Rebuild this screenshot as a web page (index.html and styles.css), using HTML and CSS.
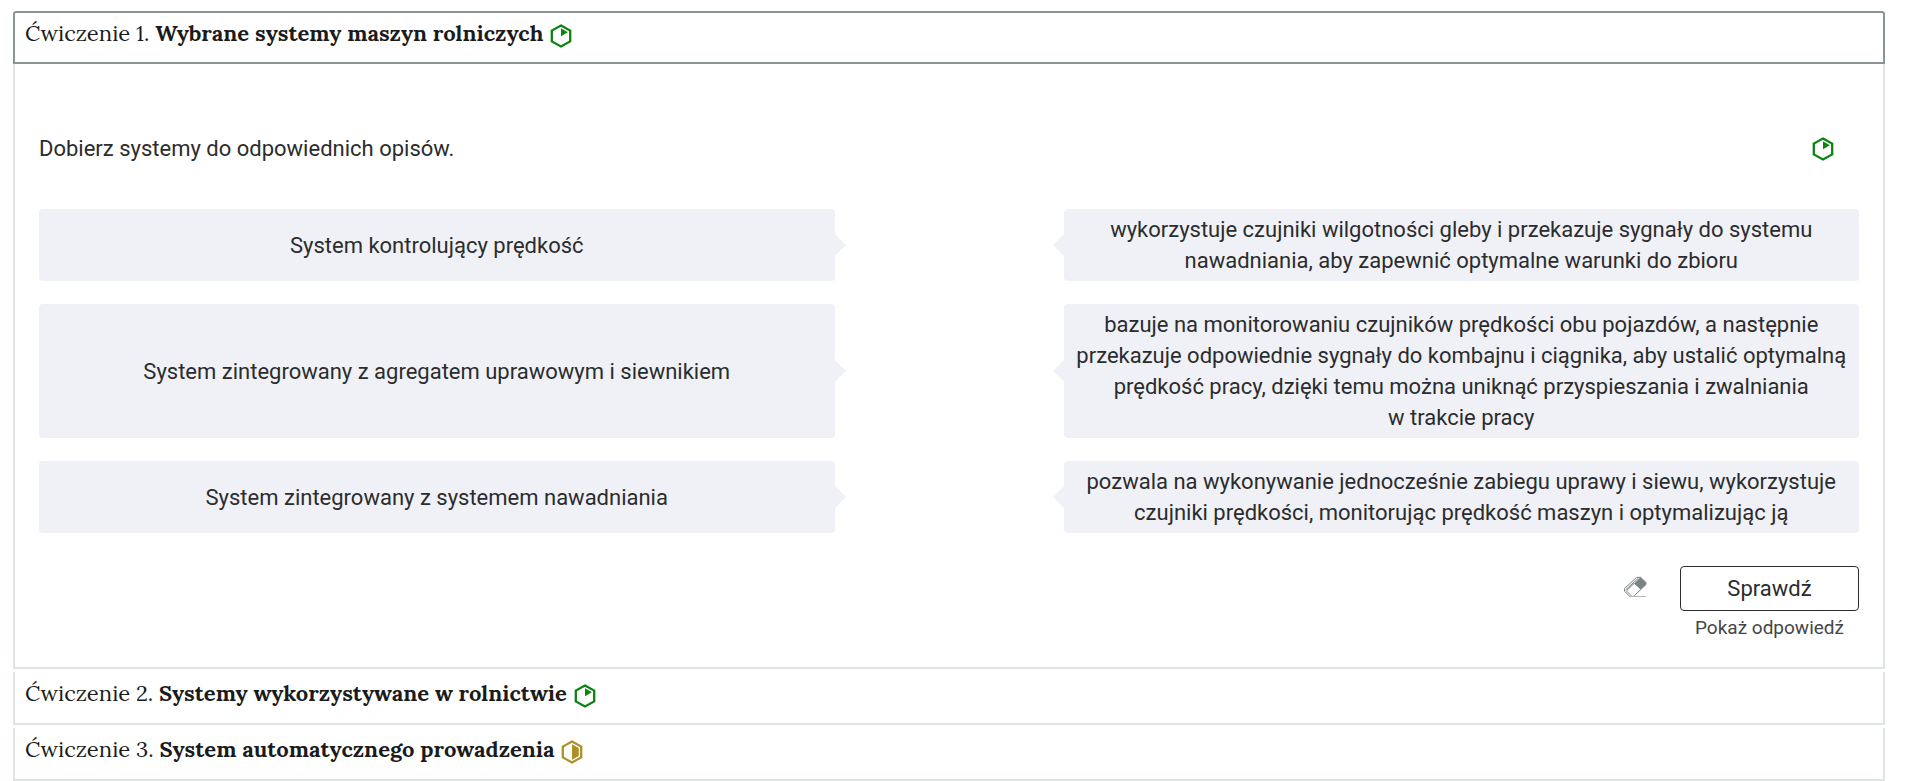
FILE: index.html
```html
<!DOCTYPE html>
<html lang="pl">
<head>
<meta charset="utf-8">
<title>Ćwiczenia</title>
<link rel="stylesheet" href="styles.css">
</head>
<body>
<svg class="sprite" aria-hidden="true">
  <symbol id="level-easy" viewBox="0 0 22 24">
    <path d="M11 1.5 20.2 6.6V17.4L11 22.5 1.8 17.4V6.6Z" fill="none" stroke="currentColor" stroke-width="2.3"/>
    <path d="M11 4.3 17.8 8.2 11 12.2Z" fill="currentColor"/>
  </symbol>
  <symbol id="level-medium" viewBox="0 0 22 24">
    <path d="M11 1.5 20.2 6.6V17.4L11 22.5 1.8 17.4V6.6Z" fill="none" stroke="currentColor" stroke-width="2.3"/>
    <path d="M11 4.2 17.8 8V16L11 19.8Z" fill="currentColor"/>
  </symbol>
</svg>
<main class="exercises">
  <section class="exercise">
    <h2 class="heading"><button class="toggle open" type="button" aria-expanded="true">Ćwiczenie 1. <strong>Wybrane systemy maszyn rolniczych</strong> <svg class="level easy"><use href="#level-easy"/></svg></button></h2>
    <div class="panel">
      <div class="task">
        <p class="instruction">Dobierz systemy do odpowiednich opisów.</p>
        <svg class="level easy"><use href="#level-easy"/></svg>
      </div>
      <div class="pairs">
        <button class="card left" type="button">System kontrolujący prędkość</button>
        <button class="card right" type="button">wykorzystuje czujniki wilgotności gleby i&nbsp;przekazuje sygnały do systemu nawadniania, aby zapewnić optymalne warunki do zbioru</button>
        <button class="card left" type="button">System zintegrowany z&nbsp;agregatem uprawowym i&nbsp;siewnikiem</button>
        <button class="card right" type="button">bazuje na monitorowaniu czujników prędkości obu pojazdów, a&nbsp;następnie przekazuje odpowiednie sygnały do kombajnu i&nbsp;ciągnika, aby ustalić optymalną prędkość pracy, dzięki temu można uniknąć przyspieszania i&nbsp;zwalniania w&nbsp;trakcie pracy</button>
        <button class="card left" type="button">System zintegrowany z&nbsp;systemem nawadniania</button>
        <button class="card right" type="button">pozwala na wykonywanie jednocześnie zabiegu uprawy i&nbsp;siewu, wykorzystuje czujniki prędkości, monitorując prędkość maszyn i&nbsp;optymalizując ją</button>
      </div>
      <div class="actions">
        <button class="erase" type="button" aria-label="Wyczyść">
          <svg viewBox="0 0 24 22" width="24" height="22">
            <path d="M6 19.5 1.5 15.2V12.5L13.5 1.5 17.5 1.3 23 6.5V8.5L11.5 19.5 10 20.5H7Z" fill="#fff" stroke="#7b8385"/>
            <path d="M17.5 1.3 23 6.5V8.5L17.5 13.5 11 7.5Z" fill="#7b8385"/>
            <path d="M11 7.5 4 14.2V15.5L8.5 20M2.5 14 15.5 2" fill="none" stroke="#7b8385"/>
            <path d="M6 20.5H23" stroke="#b4babb"/>
          </svg>
        </button>
        <div class="verify">
          <button class="check" type="button">Sprawdź</button>
          <button class="answer" type="button">Pokaż odpowiedź</button>
        </div>
      </div>
    </div>
  </section>
  <section class="exercise">
    <h2 class="heading"><button class="toggle" type="button" aria-expanded="false">Ćwiczenie 2. <strong>Systemy wykorzystywane w&nbsp;rolnictwie</strong> <svg class="level easy"><use href="#level-easy"/></svg></button></h2>
  </section>
  <section class="exercise">
    <h2 class="heading"><button class="toggle" type="button" aria-expanded="false">Ćwiczenie 3. <strong>System automatycznego prowadzenia</strong> <svg class="level medium"><use href="#level-medium"/></svg></button></h2>
  </section>
</main>
</body>
</html>
```
FILE: styles.css
```css
* { box-sizing: border-box; }
body {
  margin: 0;
  background: #fff;
  color: #2b2c2e;
  font: 22px/31px Roboto, sans-serif;
}
button {
  margin: 0;
  border: 0;
  background: none;
  color: inherit;
  font: inherit;
  cursor: pointer;
}
.sprite { position: absolute; width: 0; height: 0; }
.exercises {
  display: flex;
  flex-direction: column;
  gap: 3px;
  padding: 11px 35px 0 13px;
}
.heading { margin: 0; font-weight: 400; }
.toggle {
  display: block;
  width: 100%;
  padding: 6px 10px 15px;
  border: solid #dfe4e4;
  border-width: 0 2px 2px;
  color: #1b1b1b;
  font: 22px/30px Lora, "Liberation Serif", serif;
  text-align: left;
}
.toggle.open {
  padding: 5px 10px 14px;
  border: 2px solid #8a9495;
  border-radius: 3px 3px 0 0;
}
.level { width: 22px; height: 24px; vertical-align: -7px; }
.toggle .level { margin-left: 1px; }
.easy { color: #0a850f; }
.medium { color: #ab9127; }
.panel {
  padding: 69px 24px 24px;
  border: solid #dfe4e4;
  border-width: 0 2px 2px;
}
.task {
  display: flex;
  align-items: center;
  justify-content: space-between;
  padding-right: 25px;
}
.instruction { margin: 0; }
.pairs {
  display: grid;
  grid-template-columns: 1fr 1fr;
  gap: 23px 229px;
  margin-top: 45px;
}
.card {
  position: relative;
  padding: 5px 10px;
  border-radius: 4px;
  background: #f0f1f6;
  text-align: center;
}
.card::after {
  content: "";
  position: absolute;
  top: 50%;
  margin-top: -11px;
  border: 11px solid transparent;
}
.left::after { left: 100%; border-left-color: #f0f1f6; border-right-width: 0; }
.right::after { right: 100%; border-right-color: #f0f1f6; border-left-width: 0; }
.actions {
  display: flex;
  justify-content: flex-end;
  align-items: flex-start;
  gap: 33px;
  margin-top: 33px;
}
.erase { margin-top: 10px; padding: 0; line-height: 0; }
.verify { display: flex; flex-direction: column; width: 179px; }
.check {
  height: 45px;
  border: 1px solid #2b2c2e;
  border-radius: 4px;
}
.answer { padding: 1px 0 0; color: #444647; font-size: 19px; }
```
